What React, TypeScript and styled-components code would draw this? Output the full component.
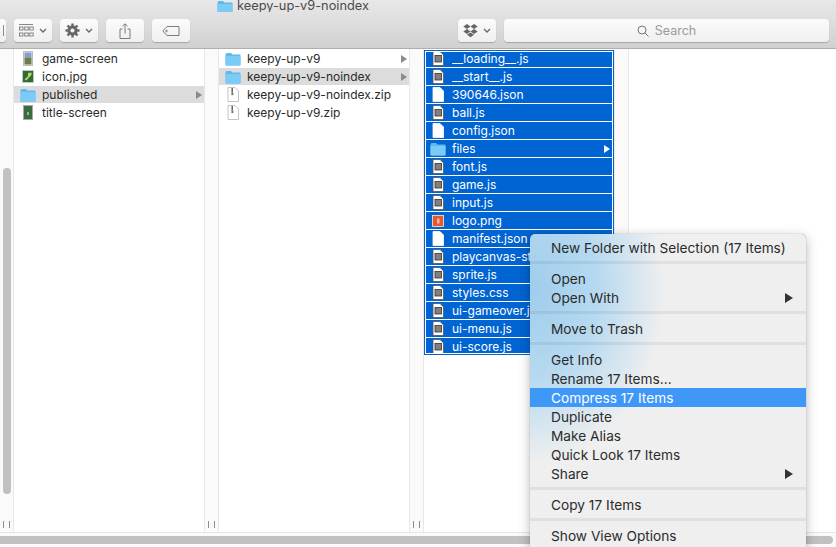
import styled, { createGlobalStyle } from 'styled-components';
import type { ReactNode } from 'react';

type IconKind = 'folder' | 'script' | 'blank' | 'zip' | 'shot' | 'thumb' | 'title' | 'logo';

interface FileItem {
  name: string;
  icon: IconKind;
  arrow?: boolean;
  active?: boolean;
}

const GlobalStyle = createGlobalStyle`
  html, body {
    margin: 0;
    padding: 0;
    background: #fff;
  }
  body {
    font-family: Inter, "Liberation Sans", sans-serif;
    -webkit-font-smoothing: antialiased;
  }
`;

const Window = styled.div`
  position: relative;
  width: 836px;
  height: 547px;
  overflow: hidden;
  display: flex;
  flex-direction: column;
  background: #fff;
`;

const Toolbar = styled.header`
  flex: 0 0 49px;
  box-sizing: border-box;
  border-bottom: 1px solid #aeaeae;
  background: linear-gradient(#e9e8e9, #d2d1d2);
  display: flex;
  flex-direction: column;
`;

const TitleRow = styled.div`
  height: 12px;
  padding-left: 217px;
  display: flex;
  align-items: flex-start;
  gap: 4px;
  overflow: hidden;
  font-size: 12.8px;
  line-height: 12px;
  color: #4a4a4a;
`;

const Tools = styled.div`
  margin-top: 7px;
  margin-left: -32px;
  display: flex;
  gap: 8px;
`;

const ToolButton = styled.div<{ $wide?: boolean }>`
  box-sizing: border-box;
  width: 38px;
  height: 23px;
  flex: ${({ $wide }) => ($wide ? '0 0 325px' : '0 0 38px')};
  border-radius: 4px;
  background: linear-gradient(#fbfbfb, #f0f0f0);
  box-shadow: 0 1px 1px rgba(0, 0, 0, 0.22);
  display: flex;
  align-items: center;
  justify-content: center;
  gap: ${({ $wide }) => ($wide ? '6px' : '5px')};
  color: #9a9a9a;
  font-size: 12.5px;
`;

const ButtonEdge = styled.span`
  margin-left: 33px;
  width: 1px;
  height: 11px;
  background: #8c8c8c;
`;

const ToolSpacer = styled.div`
  flex: 0 0 252px;
`;

const Columns = styled.main`
  flex: 1;
  min-height: 0;
  display: flex;
`;

const Resizer = styled.div<{ $first?: boolean }>`
  flex: 0 0 ${({ $first }) => ($first ? '14px' : '15px')};
  box-sizing: border-box;
  background: #fafafa;
  border-right: 1px solid #e8e8e8;
  border-left: ${({ $first }) => ($first ? 'none' : '1px solid #e8e8e8')};
  display: flex;
  flex-direction: column;
  align-items: center;
  padding-bottom: 4px;
`;

const Grip = styled.div`
  margin-top: auto;
  width: 5px;
  height: 7px;
  border-left: 1px solid #8e8e8e;
  border-right: 1px solid #8e8e8e;
`;

const ScrollThumb = styled.div`
  margin-top: 119px;
  width: 8px;
  height: 326px;
  border-radius: 4px;
  background: #c1c1c1;
`;

const Column = styled.section`
  flex: 0 0 190px;
  padding-top: 1px;
`;

const LastColumn = styled.section`
  flex: 1;
`;

const Row = styled.div<{ $active?: boolean }>`
  height: 17px;
  margin-bottom: 1px;
  padding: 0 2px 0 6px;
  display: flex;
  align-items: center;
  gap: 6px;
  background: ${({ $active }) => ($active ? '#dcdcdc' : 'transparent')};
  color: #2a2a2a;
  font-size: 12px;
`;

const RowName = styled.span`
  flex: 1;
  white-space: nowrap;
  overflow: hidden;
`;

const IconSlot = styled.span`
  flex: 0 0 16px;
  height: 16px;
  display: flex;
  align-items: center;
  justify-content: center;
`;

const Arrow = styled.span<{ $white?: boolean }>`
  flex: 0 0 auto;
  width: 0;
  height: 0;
  border-style: solid;
  border-width: 4px 0 4px 6px;
  border-color: transparent transparent transparent ${({ $white }) => ($white ? '#fff' : '#8a8a8a')};
`;

const SelectionBox = styled.div`
  box-sizing: border-box;
  width: 190px;
  height: 305px;
  border: 1px solid #0a62c9;
  padding: 1px;
`;

const SelectionClip = styled.div`
  height: 301px;
  overflow: hidden;
`;

const SelectedRow = styled(Row)`
  padding-left: 4px;
  background: #0064d3;
  color: #fff;

  &:first-child {
    margin-top: -2px;
  }
`;

const BottomBar = styled.footer`
  flex: 0 0 15px;
  box-sizing: border-box;
  border-top: 1px solid #e6e6e6;
  background: #fafafa;
  padding-top: 3px;
`;

const HScroll = styled.div`
  width: 833px;
  height: 8px;
  border-radius: 0 4px 4px 0;
  background: #c1c1c1;
`;

const Menu = styled.nav`
  position: absolute;
  left: 530px;
  top: 234px;
  width: 276px;
  height: 330px;
  padding-top: 4px;
  box-sizing: border-box;
  border-radius: 5px 5px 0 0;
  background:
    radial-gradient(ellipse 135px 175px at 0 55px, #9fcdec 0%, #b6d9f0 50%, rgba(239, 239, 239, 0) 100%),
    #efefef;
  box-shadow: 0 0 1px rgba(0, 0, 0, 0.45), 0 3px 12px rgba(0, 0, 0, 0.28);
`;

const MenuItem = styled.div<{ $active?: boolean }>`
  height: 19px;
  padding: 0 13px 0 21px;
  display: flex;
  align-items: center;
  justify-content: space-between;
  font-size: 13.7px;
  color: ${({ $active }) => ($active ? '#fff' : '#2b2b2b')};
  background: ${({ $active }) => ($active ? '#3f97f8' : 'transparent')};
`;

const MenuArrow = styled.span`
  width: 0;
  height: 0;
  border-style: solid;
  border-width: 5px 0 5px 8px;
  border-color: transparent transparent transparent #333;
`;

const MenuDivider = styled.div`
  height: 3px;
  margin: 4px 0 5px;
  background: rgba(0, 0, 0, 0.06);
`;

const column1: FileItem[] = [
  { name: 'game-screen', icon: 'shot' },
  { name: 'icon.jpg', icon: 'thumb' },
  { name: 'published', icon: 'folder', arrow: true, active: true },
  { name: 'title-screen', icon: 'title' },
];

const column2: FileItem[] = [
  { name: 'keepy-up-v9', icon: 'folder', arrow: true },
  { name: 'keepy-up-v9-noindex', icon: 'folder', arrow: true, active: true },
  { name: 'keepy-up-v9-noindex.zip', icon: 'zip' },
  { name: 'keepy-up-v9.zip', icon: 'zip' },
];

const column3: FileItem[] = [
  { name: '__loading__.js', icon: 'script' },
  { name: '__start__.js', icon: 'script' },
  { name: '390646.json', icon: 'blank' },
  { name: 'ball.js', icon: 'script' },
  { name: 'config.json', icon: 'blank' },
  { name: 'files', icon: 'folder', arrow: true },
  { name: 'font.js', icon: 'script' },
  { name: 'game.js', icon: 'script' },
  { name: 'input.js', icon: 'script' },
  { name: 'logo.png', icon: 'logo' },
  { name: 'manifest.json', icon: 'blank' },
  { name: 'playcanvas-stable.min.js', icon: 'script' },
  { name: 'sprite.js', icon: 'script' },
  { name: 'styles.css', icon: 'script' },
  { name: 'ui-gameover.js', icon: 'script' },
  { name: 'ui-menu.js', icon: 'script' },
  { name: 'ui-score.js', icon: 'script' },
];

function FolderIcon() {
  return (
    <svg width="16" height="14" viewBox="0 0 16 14">
      <path d="M0.5 2.5 Q0.5 1 2 1 H6 L7.5 2.5 H14.5 Q15.5 2.5 15.5 3.5 V12.5 Q15.5 13.5 14.5 13.5 H1.5 Q0.5 13.5 0.5 12.5 Z" fill="#62b8ee" />
      <path d="M0.5 4 H15.5 V12.5 Q15.5 13.5 14.5 13.5 H1.5 Q0.5 13.5 0.5 12.5 Z" fill="#7accf7" />
    </svg>
  );
}

function PageShape({ children, edge = '#d0d0d0' }: { children?: ReactNode; edge?: string }) {
  return (
    <svg width="12" height="15" viewBox="0 0 12 15">
      <path d="M1 0.5 H8 L11.5 4 V14.5 H1 Z" fill="#fff" stroke={edge} strokeWidth="0.8" />
      {children}
    </svg>
  );
}

function FileIcon({ kind }: { kind: IconKind }) {
  switch (kind) {
    case 'folder':
      return <FolderIcon />;
    case 'script':
      return (
        <PageShape edge="#555">
          <rect x="3" y="4.5" width="6.5" height="6.5" fill="#808080" stroke="#333" strokeWidth="0.8" />
        </PageShape>
      );
    case 'blank':
      return <PageShape edge="#fff" />;
    case 'zip':
      return (
        <PageShape edge="#b4b4b4">
          <path d="M5.2 1 V5.5" stroke="#555" strokeWidth="1.4" />
          <rect x="4.4" y="5.5" width="2" height="2.6" fill="#777" />
        </PageShape>
      );
    case 'shot':
      return (
        <svg width="10" height="15" viewBox="0 0 10 15">
          <rect x="0.5" y="0.5" width="9" height="14" fill="#eee" stroke="#bbb" />
          <rect x="1.5" y="1.5" width="7" height="5" fill="#7f9fd0" />
          <rect x="1.5" y="6.5" width="7" height="7" fill="#6f7a50" />
        </svg>
      );
    case 'thumb':
      return (
        <svg width="12" height="13" viewBox="0 0 12 13">
          <rect x="0.5" y="0.5" width="11" height="12" fill="#2f6b32" stroke="#c4c4c4" />
          <path d="M2.5 9.5 L6 6 L6 3 L9.5 2.5 L9.5 5 L7 7.5 L4.5 10.5 Z" fill="#b9d36a" />
        </svg>
      );
    case 'title':
      return (
        <svg width="10" height="15" viewBox="0 0 10 15">
          <rect x="0.5" y="0.5" width="9" height="14" fill="#3a6b42" stroke="#a8a8a8" />
          <rect x="4" y="7" width="2" height="3" fill="#8bbd7c" />
        </svg>
      );
    case 'logo':
      return (
        <svg width="12" height="12" viewBox="0 0 12 12">
          <rect x="0.5" y="0.5" width="11" height="11" fill="#e8582c" stroke="#eee" strokeWidth="0.8" />
          <rect x="5" y="3.5" width="2.5" height="5" fill="#f5b79c" />
        </svg>
      );
  }
}

function ChevronIcon() {
  return (
    <svg width="8" height="5" viewBox="0 0 8 5">
      <path d="M1 1 L4 4 L7 1" fill="none" stroke="#666" strokeWidth="1.3" />
    </svg>
  );
}

function GridIcon() {
  return (
    <svg width="15" height="13" viewBox="0 0 15 13" fill="none" stroke="#6d6d6d" strokeWidth="0.8">
      <path d="M0 0.5 H14" />
      <rect x="0.5" y="3" width="3.5" height="3" />
      <rect x="5.7" y="3" width="3.5" height="3" />
      <rect x="10.7" y="3" width="3.5" height="3" />
      <rect x="0.5" y="9" width="3.5" height="3" />
      <rect x="5.7" y="9" width="3.5" height="3" />
      <rect x="10.7" y="9" width="3.5" height="3" />
    </svg>
  );
}

function GearIcon() {
  return (
    <svg width="15" height="15" viewBox="0 0 15 15">
      <circle cx="7.5" cy="7.5" r="3.6" fill="none" stroke="#666" strokeWidth="3" />
      <path d="M7.5 0.5 V14.5 M0.5 7.5 H14.5 M2.5 2.5 L12.5 12.5 M12.5 2.5 L2.5 12.5" stroke="#666" strokeWidth="2.4" strokeDasharray="2.4 9.2 2.4 0" />
    </svg>
  );
}

function ShareIcon() {
  return (
    <svg width="12" height="16" viewBox="0 0 12 16" fill="none" stroke="#6d6d6d" strokeWidth="0.9">
      <path d="M3.5 6 H1 V15.5 H11 V6 H8.5" />
      <path d="M6 10.5 V1 M3.5 3.2 L6 0.8 L8.5 3.2" />
    </svg>
  );
}

function TagIcon() {
  return (
    <svg width="18" height="10" viewBox="0 0 18 10" fill="none" stroke="#6d6d6d" strokeWidth="0.9">
      <path d="M5 0.5 H17 V9.5 H5 L0.8 5 Z" />
      <circle cx="4.5" cy="5" r="0.8" />
    </svg>
  );
}

function DropboxIcon() {
  return (
    <svg width="15" height="14" viewBox="0 0 15 14" fill="#666">
      <path d="M4 0 L7.5 2.4 L4 5 L0.3 2.5 Z" />
      <path d="M11 0 L14.7 2.5 L11 5 L7.5 2.4 Z" />
      <path d="M4 5 L7.5 7.5 L4 10 L0.3 7.5 Z" />
      <path d="M11 5 L14.7 7.5 L11 10 L7.5 7.5 Z" />
      <path d="M4 10.8 L7.5 8.4 L11 10.8 L7.5 13.2 Z" />
    </svg>
  );
}

function SearchIcon() {
  return (
    <svg width="12" height="12" viewBox="0 0 12 12" fill="none" stroke="#777" strokeWidth="1">
      <circle cx="5" cy="5" r="4" />
      <path d="M8 8 L11.5 11.5" />
    </svg>
  );
}

function FileRow({ item }: { item: FileItem }) {
  return (
    <Row $active={item.active}>
      <IconSlot>
        <FileIcon kind={item.icon} />
      </IconSlot>
      <RowName>{item.name}</RowName>
      {item.arrow && <Arrow />}
    </Row>
  );
}

function MenuEntry({ label, active, submenu }: { label: string; active?: boolean; submenu?: boolean }) {
  return (
    <MenuItem $active={active}>
      <span>{label}</span>
      {submenu && <MenuArrow />}
    </MenuItem>
  );
}

export default function App() {
  return (
    <Window>
      <GlobalStyle />
      <Toolbar>
        <TitleRow>
          <FolderIcon />
          <span>keepy-up-v9-noindex</span>
        </TitleRow>
        <Tools>
          <ToolButton>
            <ButtonEdge />
          </ToolButton>
          <ToolButton>
            <GridIcon />
            <ChevronIcon />
          </ToolButton>
          <ToolButton>
            <GearIcon />
            <ChevronIcon />
          </ToolButton>
          <ToolButton>
            <ShareIcon />
          </ToolButton>
          <ToolButton>
            <TagIcon />
          </ToolButton>
          <ToolSpacer />
          <ToolButton>
            <DropboxIcon />
            <ChevronIcon />
          </ToolButton>
          <ToolButton $wide>
            <SearchIcon />
            Search
          </ToolButton>
        </Tools>
      </Toolbar>

      <Columns>
        <Resizer $first>
          <ScrollThumb />
          <Grip />
        </Resizer>
        <Column>
          {column1.map((item) => (
            <FileRow key={item.name} item={item} />
          ))}
        </Column>
        <Resizer>
          <Grip />
        </Resizer>
        <Column>
          {column2.map((item) => (
            <FileRow key={item.name} item={item} />
          ))}
        </Column>
        <Resizer>
          <Grip />
        </Resizer>
        <Column>
          <SelectionBox>
            <SelectionClip>
              {column3.map((item) => (
                <SelectedRow key={item.name}>
                  <IconSlot>
                    <FileIcon kind={item.icon} />
                  </IconSlot>
                  <RowName>{item.name}</RowName>
                  {item.arrow && <Arrow $white />}
                </SelectedRow>
              ))}
            </SelectionClip>
          </SelectionBox>
        </Column>
        <Resizer />
        <LastColumn />
      </Columns>

      <BottomBar>
        <HScroll />
      </BottomBar>

      <Menu>
        <MenuEntry label="New Folder with Selection (17 Items)" />
        <MenuDivider />
        <MenuEntry label="Open" />
        <MenuEntry label="Open With" submenu />
        <MenuDivider />
        <MenuEntry label="Move to Trash" />
        <MenuDivider />
        <MenuEntry label="Get Info" />
        <MenuEntry label="Rename 17 Items..." />
        <MenuEntry label="Compress 17 Items" active />
        <MenuEntry label="Duplicate" />
        <MenuEntry label="Make Alias" />
        <MenuEntry label="Quick Look 17 Items" />
        <MenuEntry label="Share" submenu />
        <MenuDivider />
        <MenuEntry label="Copy 17 Items" />
        <MenuDivider />
        <MenuEntry label="Show View Options" />
      </Menu>
    </Window>
  );
}
